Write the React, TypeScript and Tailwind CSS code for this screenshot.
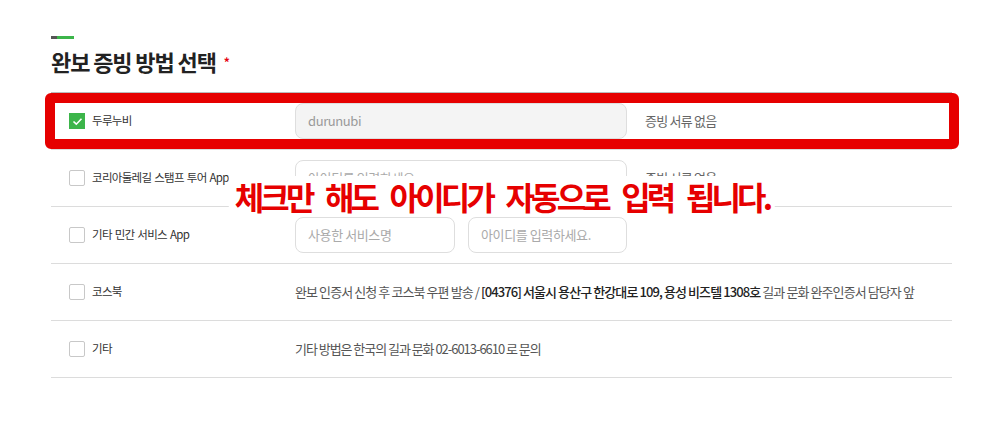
const font = { fontFamily: '"Noto Sans CJK KR", "Noto Sans", sans-serif' };

const Check = ({ on }: { on?: boolean }) =>
  on ? (
    <span className="w-4 h-4 bg-[#3cb54a] flex items-center justify-center shrink-0">
      <svg width="11" height="9" viewBox="0 0 11 9" fill="none">
        <path d="M1.5 4.5 L4.3 7.2 L9.5 1.8" stroke="white" strokeWidth="1.6" />
      </svg>
    </span>
  ) : (
    <span className="w-4 h-4 border border-[#c8c8c8] rounded-[2px] bg-white shrink-0" />
  );

const Row = ({ on, label, children }: { on?: boolean; label: string; children: React.ReactNode }) => (
  <div className="flex items-center h-[57px] border-b border-[#dcdcdc]">
    <div className="w-[244px] pl-[18px] flex items-center gap-[7px] shrink-0">
      <Check on={on} />
      <span className="text-[11.5px] text-[#333] tracking-[-0.06em] [word-spacing:1px]">{label}</span>
    </div>
    {children}
  </div>
);

const Input = ({ w, text, filled }: { w: string; text: string; filled?: boolean }) => (
  <div
    className={`${w} h-[36px] rounded-[8px] border border-[#dedede] flex items-center pl-[12px] text-[13px] tracking-[-0.03em] shrink-0 ${
      filled ? "bg-[#f4f4f4] text-[#9a9a9a]" : "bg-white text-[#aaa]"
    }`}
  >
    {text}
  </div>
);

const App = () => {
  return (
    <div className="relative w-[1004px] h-[422px] bg-white overflow-hidden" style={font}>
      <div className="pl-[51px] pr-[52px] pt-[36px]">
        <div className="flex h-[3px]">
          <span className="w-[6px] bg-[#555]" />
          <span className="w-[17px] bg-[#3cb54a]" />
        </div>
        <h2 className="mt-[8px] mb-[17px] h-[28px] leading-[28px] text-[22px] font-bold text-[#222] tracking-[-0.05em] flex items-center">
          완보 증빙 방법 선택
          <span className="text-[#e60012] text-[12px] ml-[8px] mt-[2px]">*</span>
        </h2>

        <div className="border-t border-[#bbb]">
          <Row on label="두루누비">
            <Input w="w-[332px]" text="durunubi" filled />
            <span className="pl-[18px] text-[13px] text-[#666] tracking-[-0.06em]">증빙 서류 없음</span>
          </Row>
          <Row label="코리아둘레길 스탬프 투어 App">
            <Input w="w-[332px]" text="아이디를 입력하세요" />
            <span className="pl-[18px] text-[13px] text-[#666] tracking-[-0.06em]">증빙 서류 없음</span>
          </Row>
          <Row label="기타 민간 서비스 App">
            <div className="flex gap-[13px]">
              <Input w="w-[160px]" text="사용한 서비스명" />
              <Input w="w-[159px]" text="아이디를 입력하세요." />
            </div>
          </Row>
          <Row label="코스북">
            <span className="text-[13px] text-[#555] tracking-[-0.07em] whitespace-nowrap">
              완보 인증서 신청 후 코스북 우편 발송 /{" "}
              <span className="text-[#222] font-medium">[04376] 서울시 용산구 한강대로 109, 용성 비즈텔 1308호</span>{" "}
              길과 문화 완주인증서 담당자 앞
            </span>
          </Row>
          <Row label="기타">
            <span className="text-[13px] text-[#555] tracking-[-0.08em]">
              기타 방법은 한국의 길과 문화 02-6013-6610 로 문의
            </span>
          </Row>
        </div>
      </div>

      {/* annotation overlay */}
      <div className="absolute left-[45px] top-[93px] w-[914px] h-[56px] border-[10px] border-[#e60000] rounded-[6px]" />
      <div className="absolute left-1/2 -translate-x-1/2 top-[176px] bg-white px-[6px] text-[32px] leading-[40px] font-bold text-[#e60000] tracking-[-0.12em] [word-spacing:10px] whitespace-nowrap">
        체크만 해도 아이디가 자동으로 입력 됩니다.
      </div>
    </div>
  );
};

export default App;
